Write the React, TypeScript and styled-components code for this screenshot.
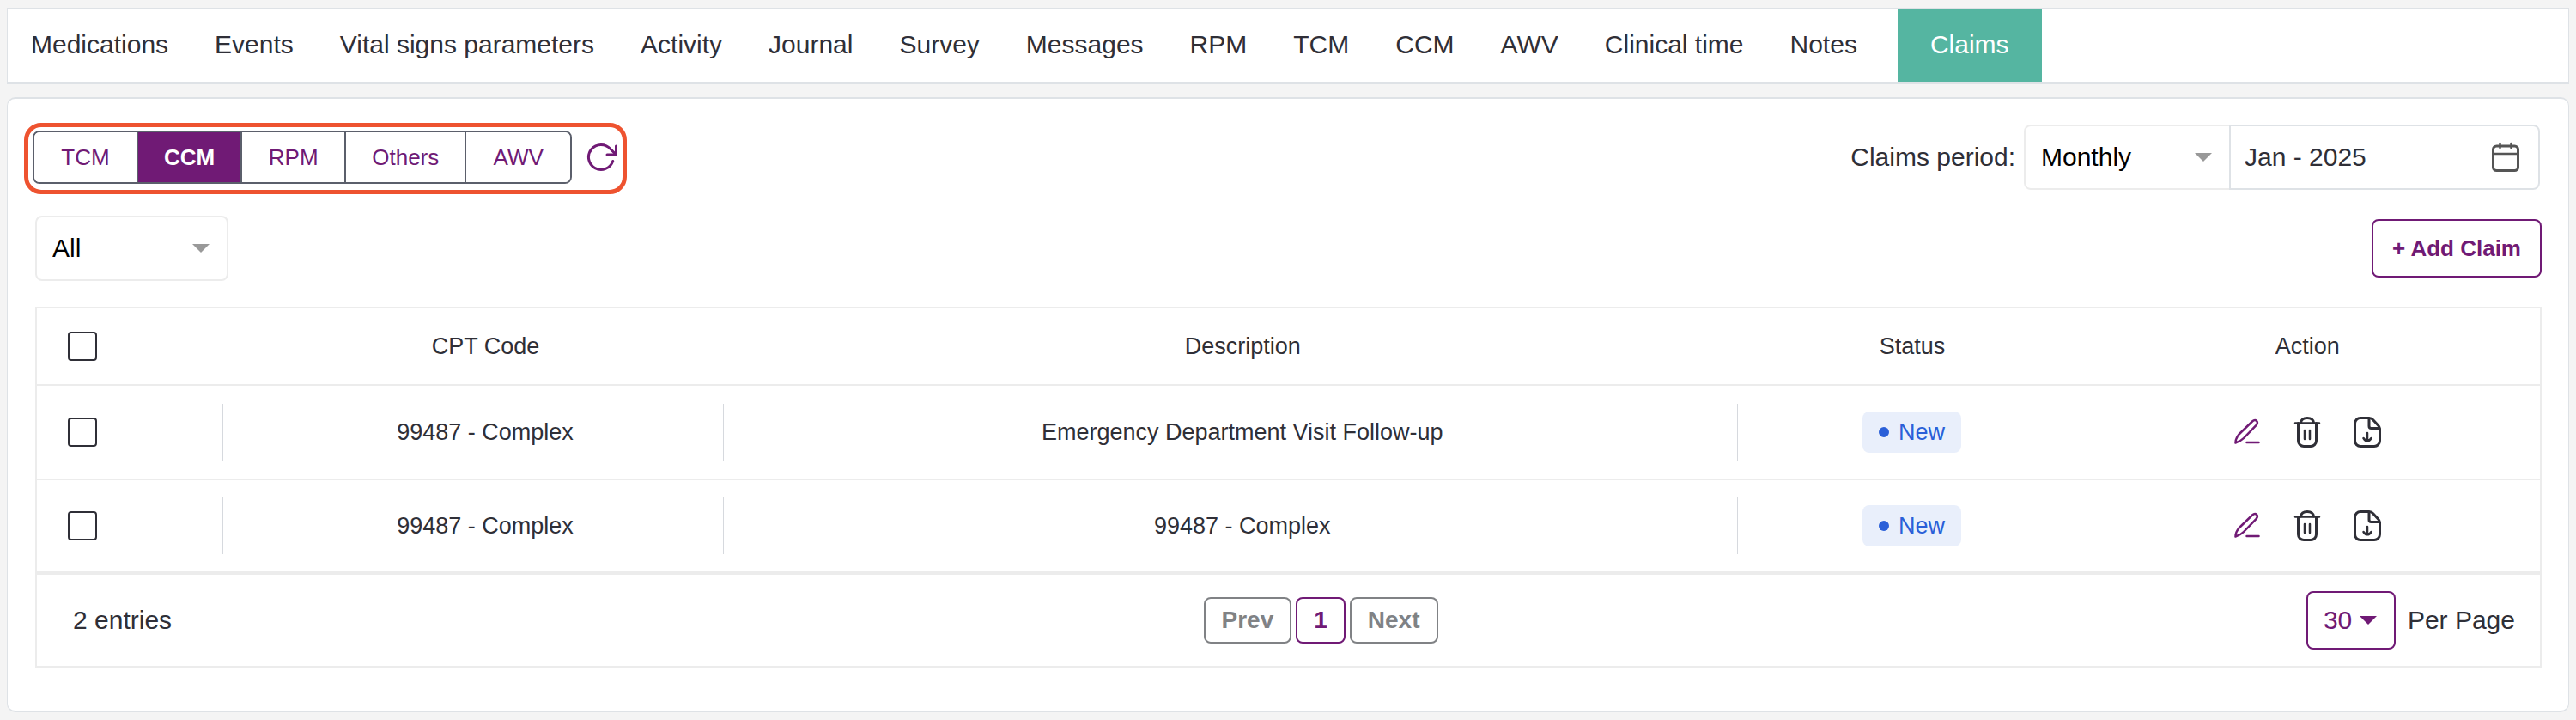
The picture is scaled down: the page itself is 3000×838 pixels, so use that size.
import React, { useState } from "react";
import styled, { createGlobalStyle, css } from "styled-components";

const purple = "#701a75";
const ink = "#2f2f37";
const line = "#ececec";
const edge = "#dee2e6";

const GlobalStyle = createGlobalStyle`
  *, *::before, *::after { box-sizing: border-box; }
  body {
    margin: 0;
    background: #f4f4f4;
    color: ${ink};
    font: 30px/36px "Liberation Sans", Arial, sans-serif;
  }
  button, input, select { font: inherit; color: inherit; margin: 0; }
  button { cursor: pointer; }
`;

const Page = styled.div`
  display: flex;
  flex-direction: column;
  gap: 15px;
  padding: 9px 8px;
`;

const Nav = styled.nav`
  display: flex;
  height: 89px;
  background: #fff;
  border: 2px solid ${edge};
  border-width: 2px 1px;
`;

const NavLink = styled.a<{ $active?: boolean }>`
  display: flex;
  align-items: center;
  padding: 0 27px 4px;
  color: inherit;
  text-decoration: none;
  white-space: nowrap;
  ${(p) =>
    p.$active &&
    css`
      margin-left: 20px;
      padding: 0 38px 4px;
      background: #55b5a1;
      color: #fff;
    `}
`;

const Card = styled.main`
  background: #fff;
  border: 2px solid ${edge};
  border-width: 2px 1px;
  border-radius: 10px;
  padding: 28px 31px 50px 32px;
`;

const Bar = styled.div`
  display: flex;
  align-items: flex-start;
  justify-content: space-between;
`;

const TypeFilter = styled.div`
  display: flex;
  align-items: center;
  gap: 17px;
  height: 83px;
  margin-left: -13px;
  padding: 4px 6px 7px 5px;
  border: 5px solid #ee5330;
  border-radius: 20px;
`;

const Segments = styled.div`
  display: flex;
  height: 62px;
  border: 2px solid #5b5f6b;
  border-radius: 8px;
  overflow: hidden;
`;

const Segment = styled.button<{ $active: boolean }>`
  min-width: 121px;
  padding: 0 30px;
  border: 0;
  border-right: 2px solid #5b5f6b;
  background: ${(p) => (p.$active ? purple : "#fff")};
  color: ${(p) => (p.$active ? "#fff" : purple)};
  font-size: 26px;
  font-weight: ${(p) => (p.$active ? 700 : 400)};
  &:last-child { border-right: 0; }
`;

const IconButton = styled.button<{ $accent?: boolean }>`
  display: flex;
  padding: 0;
  border: 0;
  background: none;
  color: ${(p) => (p.$accent ? purple : ink)};
`;

const Period = styled.div`
  display: flex;
  align-items: center;
  gap: 10px;
  padding: 2px 2px 0 0;
`;

const Joined = styled.div`
  display: flex;
`;

const SelectBox = styled.div<{ $width: number; $joined?: boolean }>`
  display: grid;
  align-items: center;
  width: ${(p) => p.$width}px;
  height: 76px;
  border: 2px solid ${line};
  border-radius: ${(p) => (p.$joined ? "8px 0 0 8px" : "8px")};
  ${(p) => p.$joined && "border-right: 0;"}
  > * { grid-area: 1 / 1; }
  > svg { justify-self: end; margin-right: 20px; pointer-events: none; }
`;

const Select = styled.select`
  appearance: none;
  width: 100%;
  height: 100%;
  padding: 0 48px 0 18px;
  border: 0;
  background: none;
  color: #000;
`;

const DateBox = styled.div`
  display: flex;
  align-items: center;
  width: 362px;
  height: 76px;
  padding: 0 22px 0 16px;
  border: 2px solid ${edge};
  border-radius: 0 8px 8px 0;
`;

const DateInput = styled.input`
  flex: 1;
  min-width: 0;
  padding: 0;
  border: 0;
  background: none;
`;

const FilterBar = styled(Bar)`
  align-items: center;
  margin: 25px 0 30px;
`;

const AddButton = styled.button`
  height: 68px;
  padding: 0 22px;
  border: 2px solid ${purple};
  border-radius: 8px;
  background: #fff;
  color: ${purple};
  font-size: 26px;
  font-weight: 700;
`;

const Panel = styled.section`
  border: 2px solid ${line};
`;

const Table = styled.table`
  width: 100%;
  border-collapse: separate;
  border-spacing: 0;
  table-layout: fixed;
  font-size: 27px;
`;

const SelectCol = styled.col`
  width: 217px;
`;
const CodeCol = styled.col`
  width: 20%;
`;
const DescriptionCol = styled.col`
  width: 40.5%;
`;
const StatusCol = styled.col`
  width: 13%;
`;

const Row = styled.tr`
  > * { border-bottom: 2px solid ${line}; }
  tbody > &:last-child > td { border-bottom-width: 4px; }
`;

const HeadCell = styled.th`
  height: 90px;
  padding: 0 0 0 28px;
  font-weight: 400;
  &:first-child { padding-left: 36px; text-align: left; }
  &:last-child { padding-right: 14px; }
`;

const Cell = styled.td`
  height: 110px;
  padding: 0;
`;

const CellInner = styled.div<{ $tall?: boolean }>`
  display: flex;
  align-items: center;
  justify-content: center;
  height: ${(p) => (p.$tall ? 82 : 66)}px;
  padding-left: 28px;
  border-right: 1px solid #d6d9de;
  ${Cell}:first-child > & { justify-content: flex-start; padding-left: 36px; }
  ${Cell}:last-child > & { border: 0; padding-right: 14px; }
`;

const Checkbox = styled.input`
  appearance: none;
  display: block;
  width: 34px;
  height: 34px;
  border: 2px solid ${ink};
  border-radius: 4px;
  background: #fff;
  &:checked { background: ${purple}; }
`;

const Badge = styled.span`
  display: flex;
  align-items: center;
  gap: 11px;
  height: 48px;
  padding: 0 19px;
  border-radius: 8px;
  background: #e9effb;
  color: #2a5fd8;
  &::before {
    content: "";
    width: 12px;
    height: 12px;
    border-radius: 50%;
    background: currentColor;
  }
`;

const Actions = styled.div`
  display: flex;
  align-items: center;
  gap: 30px;
`;

const Footer = styled.footer`
  display: grid;
  grid-template-columns: 1fr auto 1fr;
  align-items: center;
  height: 106px;
  padding: 0 29px 0 42px;
`;

const Pager = styled.div`
  display: flex;
  align-items: center;
  gap: 5px;
  margin-left: 62px;
`;

const PageButton = styled.button<{ $current?: boolean }>`
  height: 54px;
  padding: 0 19px;
  border: 2px solid ${(p) => (p.$current ? purple : "#808285")};
  border-radius: 8px;
  background: #fff;
  color: ${(p) => (p.$current ? purple : "#808285")};
  font-size: 28px;
  font-weight: 700;
`;

const PerPage = styled.label`
  display: flex;
  align-items: center;
  justify-self: end;
  gap: 14px;
`;

const SizeBox = styled(SelectBox)`
  height: 68px;
  border-color: ${purple};
  color: ${purple};
`;

const SizeSelect = styled(Select)`
  padding: 0 0 0 18px;
  color: ${purple};
`;

const Caret = ({ color }: { color: string }) => (
  <svg width="20" height="10" viewBox="0 0 20 10" aria-hidden="true">
    <path d="M0 0h20L10 10z" fill={color} />
  </svg>
);

const RefreshIcon = () => (
  <svg width="36" height="36" viewBox="0 0 36 36" fill="none" stroke="currentColor" strokeWidth="3" strokeLinecap="round" strokeLinejoin="round" aria-hidden="true">
    <path d="M30.700 22.500A14.500 14.500 0 1 1 28 8.500L34 14.500" />
    <path d="M34.500 5v10H24" />
  </svg>
);

const CalendarIcon = () => (
  <svg width="32" height="36" viewBox="0 0 32 36" fill="none" stroke="#555" strokeWidth="3" strokeLinecap="round" aria-hidden="true">
    <rect x="1.500" y="5" width="29" height="28.500" rx="4" />
    <path d="M2 14h28M9.500 2v5M22.500 2v5" strokeWidth="2.500" />
  </svg>
);

const EditIcon = () => (
  <svg width="40" height="40" viewBox="0 0 40 40" fill="none" stroke="currentColor" strokeWidth="2.500" strokeLinecap="round" strokeLinejoin="round" aria-hidden="true">
    <path d="M26 7.500c2-1.800 3.800-1.800 5-.6s1.200 3-.4 5L16 27c-3 3-5.500 4.200-9.500 5.500 0-4 1-6.500 4-10z" />
    <path d="M19.500 32h14" />
  </svg>
);

const TrashIcon = () => (
  <svg width="40" height="40" viewBox="0 0 40 40" fill="none" stroke="currentColor" strokeWidth="3" strokeLinecap="round" aria-hidden="true">
    <path d="M9.500 9.500V30a6.500 6.500 0 0 0 6.500 6.500h8a6.500 6.500 0 0 0 6.500-6.500V9.500M12.500 9c.5-3.500 3.500-5.500 7.500-5.500s7 2 7.500 5.500" />
    <path d="M6 9.500h28M17 18v10M23 18v10" strokeWidth="2.500" />
  </svg>
);

const FileDownIcon = () => (
  <svg width="40" height="40" viewBox="0 0 40 40" fill="none" stroke="currentColor" strokeWidth="3" strokeLinecap="round" strokeLinejoin="round" aria-hidden="true">
    <path d="M22 3.500H12A6.500 6.500 0 0 0 5.500 10v20a6.500 6.500 0 0 0 6.500 6.500h16a6.500 6.500 0 0 0 6.500-6.500V16c0-2-.5-2.500-2-4l-6-6.500c-1.300-1.500-2.500-2-4.500-2z" />
    <path d="M22 4v9a2.500 2.500 0 0 0 2.500 2.500H34" />
    <path d="M20 21v9M15.500 27c1.500 2.500 3 3.300 4.500 3.300s3-.8 4.500-3.300" strokeWidth="2.500" />
  </svg>
);

const tabs = ["Medications", "Events", "Vital signs parameters", "Activity", "Journal", "Survey", "Messages", "RPM", "TCM", "CCM", "AWV", "Clinical time", "Notes", "Claims"];
const types = ["TCM", "CCM", "RPM", "Others", "AWV"];
const claims = [
  { id: 1, code: "99487 - Complex", description: "Emergency Department Visit Follow-up", status: "New" },
  { id: 2, code: "99487 - Complex", description: "99487 - Complex", status: "New" },
];

export default function App() {
  const [type, setType] = useState("CCM");
  const [period, setPeriod] = useState("Jan - 2025");

  return (
    <>
      <GlobalStyle />
      <Page>
        <Nav aria-label="Patient sections">
          {tabs.map((tab) => (
            <NavLink key={tab} href="#" $active={tab === "Claims"} aria-current={tab === "Claims" ? "page" : undefined}>
              {tab}
            </NavLink>
          ))}
        </Nav>
        <Card>
          <Bar>
            <TypeFilter>
              <Segments role="group" aria-label="Claim type">
                {types.map((t) => (
                  <Segment key={t} type="button" $active={t === type} aria-pressed={t === type} onClick={() => setType(t)}>
                    {t}
                  </Segment>
                ))}
              </Segments>
              <IconButton type="button" aria-label="Refresh" $accent>
                <RefreshIcon />
              </IconButton>
            </TypeFilter>
            <Period>
              <label htmlFor="period">Claims period:</label>
              <Joined>
                <SelectBox $width={239} $joined>
                  <Select id="period" defaultValue="Monthly">
                    <option>Monthly</option>
                  </Select>
                  <Caret color="#999" />
                </SelectBox>
                <DateBox>
                  <DateInput aria-label="Month" value={period} onChange={(e) => setPeriod(e.target.value)} />
                  <CalendarIcon />
                </DateBox>
              </Joined>
            </Period>
          </Bar>
          <FilterBar>
            <SelectBox $width={225}>
              <Select aria-label="Status filter" defaultValue="All">
                <option>All</option>
              </Select>
              <Caret color="#999" />
            </SelectBox>
            <AddButton type="button">+ Add Claim</AddButton>
          </FilterBar>
          <Panel>
            <Table>
              <colgroup>
                <SelectCol />
                <CodeCol />
                <DescriptionCol />
                <StatusCol />
                <col />
              </colgroup>
              <thead>
                <Row>
                  <HeadCell><Checkbox type="checkbox" aria-label="Select all claims" /></HeadCell>
                  <HeadCell>CPT Code</HeadCell>
                  <HeadCell>Description</HeadCell>
                  <HeadCell>Status</HeadCell>
                  <HeadCell>Action</HeadCell>
                </Row>
              </thead>
              <tbody>
                {claims.map((claim) => (
                  <Row key={claim.id}>
                    <Cell><CellInner><Checkbox type="checkbox" aria-label={`Select claim ${claim.id}`} /></CellInner></Cell>
                    <Cell><CellInner>{claim.code}</CellInner></Cell>
                    <Cell><CellInner>{claim.description}</CellInner></Cell>
                    <Cell><CellInner $tall><Badge>{claim.status}</Badge></CellInner></Cell>
                    <Cell>
                      <CellInner>
                        <Actions>
                          <IconButton type="button" aria-label="Edit" $accent><EditIcon /></IconButton>
                          <IconButton type="button" aria-label="Delete"><TrashIcon /></IconButton>
                          <IconButton type="button" aria-label="Download"><FileDownIcon /></IconButton>
                        </Actions>
                      </CellInner>
                    </Cell>
                  </Row>
                ))}
              </tbody>
            </Table>
            <Footer>
              <span>2 entries</span>
              <Pager>
                <PageButton type="button">Prev</PageButton>
                <PageButton type="button" $current aria-current="page">1</PageButton>
                <PageButton type="button">Next</PageButton>
              </Pager>
              <PerPage>
                <SizeBox $width={104}>
                  <SizeSelect defaultValue="30">
                    <option>30</option>
                  </SizeSelect>
                  <Caret color={purple} />
                </SizeBox>
                Per Page
              </PerPage>
            </Footer>
          </Panel>
        </Card>
      </Page>
    </>
  );
}
